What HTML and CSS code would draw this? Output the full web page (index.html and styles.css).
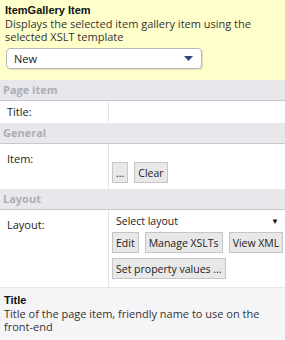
FILE: index.html
```html
<!DOCTYPE html>
<html>
<head>
<meta charset="utf-8">
<link rel="stylesheet" href="styles.css">
</head>
<body>
<div class="panel">
  <div class="intro">
    <div class="intro-title">ItemGallery Item</div>
    <div class="intro-desc">Displays the selected item gallery item using the selected XSLT template</div>
    <div class="select">
      <span>New</span>
      <svg class="caret" width="9" height="5" viewBox="0 0 9 5"><path d="M0 0H9L4.5 5Z" fill="#2b4a78"/></svg>
    </div>
  </div>

  <div class="section">Page item</div>
  <div class="row row-title">
    <div class="label">Title:</div>
    <div class="value"></div>
  </div>

  <div class="section">General</div>
  <div class="row row-item">
    <div class="label">Item:</div>
    <div class="value">
      <div class="btns"><button class="btn">...</button><button class="btn">Clear</button></div>
    </div>
  </div>

  <div class="section">Layout</div>
  <div class="row row-layout">
    <div class="label">Layout:</div>
    <div class="value">
      <div class="layout-select"><span>Select layout</span><span class="tri">▼</span></div>
      <div class="btns"><button class="btn">Edit</button><button class="btn">Manage XSLTs</button><button class="btn">View XML</button></div>
      <div class="btns"><button class="btn">Set property values ...</button></div>
    </div>
  </div>

  <div class="help">
    <div class="help-title">Title</div>
    <div class="help-desc">Title of the page item, friendly name to use on the front-end</div>
  </div>
</div>
</body>
</html>
```
FILE: styles.css
```css
* { box-sizing: border-box; }
html, body { margin: 0; padding: 0; }
body {
  width: 285px;
  height: 340px;
  overflow: hidden;
  font-family: "Open Sans", "Liberation Sans", sans-serif;
  font-size: 11px;
  color: #222;
  background: #f5f5f8;
}
.panel { display: flex; flex-direction: column; }
.intro {
  background: #ffffcc;
  padding: 3px 5px 0 5px;
  height: 80px;
}
.intro-title {
  font-family: "Liberation Sans", sans-serif;
  font-weight: bold;
  font-size: 11px;
  line-height: 14px;
  color: #111;
}
.intro-desc { line-height: 13px; color: #333; }
.select {
  margin: 5px 0 0 1px;
  width: 196px;
  height: 21px;
  background: #fff;
  border: 1px solid #b8b8b8;
  border-radius: 4px;
  box-shadow: 1px 1px 1px rgba(0,0,0,0.12);
  display: flex;
  align-items: center;
  justify-content: space-between;
  padding: 0 8px 0 7px;
  color: #222;
}
.section {
  background: #e8e7ec;
  color: #adadb5;
  font-weight: bold;
  height: 21px;
  line-height: 20px;
  padding-left: 3px;
  border-bottom: 1px solid #c8c8cc;
}
.row {
  display: flex;
  background: #fff;
}
.label { width: 109px; padding: 3px 0 0 7px; border-right: 1px solid #e4e4e8; color: #222; }
.value { flex: 1; padding: 0 0 0 3px; }
.row-title { height: 22px; border-bottom: 1px solid #fff; }
.row-item { height: 45px; }
.row-item .label { padding-top: 7px; }
.row-item .btns { margin-top: 18px; }
.row-layout { height: 77px; }
.row-layout .label { padding-top: 7px; }
.layout-select {
  display: flex;
  justify-content: space-between;
  padding: 4px 6px 0 4px;
  height: 20px;
  font-size: 10.5px;
}
.tri { font-size: 8px; padding-top: 1px; color: #111; }
.btns { display: flex; gap: 6px; margin-top: 3px; }
.row-layout .btns { margin-top: 2px; margin-bottom: 5px; }
.btn {
  font-family: inherit;
  font-size: 10.5px;
  white-space: nowrap;
  color: #222;
  background: #e8e8e8;
  border: 1px solid #c6c6c6;
  height: 21px;
  padding: 0 3px;
  margin: 0;
}
.help {
  padding: 5px 4px 0 4px;
  background: #f5f5f8;
  border-top: 1px solid #e6e6ea;
}
.help-title { font-family: "Liberation Sans", sans-serif; font-weight: bold; font-size: 11px; line-height: 14px; color: #111; }
.help-desc { line-height: 13px; color: #333; }
```
